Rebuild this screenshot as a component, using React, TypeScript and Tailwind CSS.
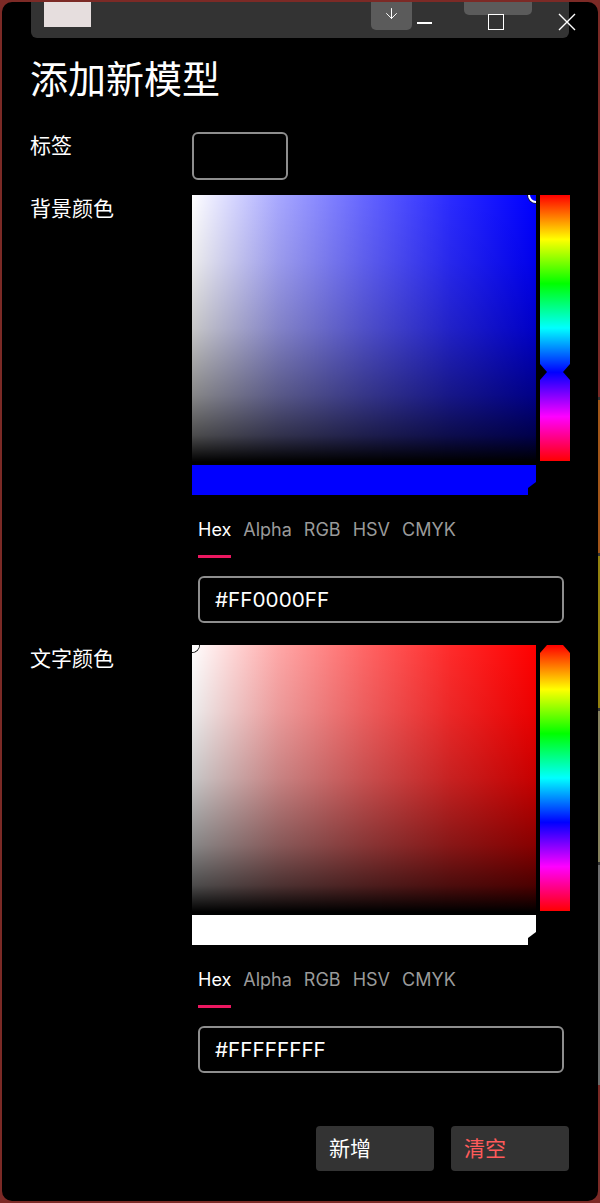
import { ArrowDown } from 'lucide-react';

type PickerProps = {
    hue: string;
    fill: string;
    hex: string;
    handle: 'tl' | 'tr';
    huePos: number;
};

const tabs = ['Hex', 'Alpha', 'RGB', 'HSV', 'CMYK'];

function ColorPicker({ hue, fill, hex, handle, huePos }: PickerProps) {
    return (
        <div className="flex flex-col">
            <div className="flex gap-[4px]">
                <div
                    className="relative w-[344px] h-[267px] overflow-hidden bg-[image:linear-gradient(to_bottom,rgba(0,0,0,0)_0%,rgba(0,0,0,0.08)_25%,rgba(0,0,0,0.22)_50%,rgba(0,0,0,0.47)_75%,rgba(0,0,0,0.7)_90%,#000_100%),linear-gradient(to_right,#fff_0%,rgba(255,255,255,0.66)_25%,rgba(255,255,255,0.4)_50%,rgba(255,255,255,0.17)_75%,rgba(255,255,255,0)_100%)]"
                    style={{ backgroundColor: hue }}
                >
                    {handle === 'tr' ? (
                        <div className="absolute -top-[8px] -right-[8px] w-[16px] h-[16px] rounded-full border-2 border-white shadow-[0_0_0_1px_#222]" />
                    ) : (
                        <div className="absolute -top-[7px] -left-[7px] w-[14px] h-[14px] rounded-full border-2 border-white shadow-[0_0_0_1px_#111]" />
                    )}
                </div>
                <div className="relative w-[30px] h-[266px] overflow-hidden bg-[image:linear-gradient(to_bottom,#f00,#ff0,#0f0,#0ff,#00f,#f0f,#f00)]">
                    <svg
                        className="absolute left-0 w-[30px] h-[16px]"
                        style={{ top: `calc(${huePos * 100}% - 8px)` }}
                        viewBox="0 0 30 16"
                    >
                        <polygon points="0,0 7,8 0,16" fill="#000" />
                        <polygon points="30,0 23,8 30,16" fill="#000" />
                    </svg>
                </div>
            </div>
            <div className="relative mt-[3px] w-[344px] h-[30px]" style={{ backgroundColor: fill }}>
                <svg className="absolute right-0 bottom-0 w-[8px] h-[13px]" viewBox="0 0 8 13">
                    <polygon points="0,13 0,6 8,0 8,13" fill="#000" />
                </svg>
            </div>
            <div className="ml-[6px] mt-[23px] flex gap-[12px] text-[18px] leading-[24px]">
                {tabs.map((t, i) => (
                    <div key={t} className="flex flex-col">
                        <span className={i === 0 ? 'text-white' : 'text-[#9a9a9a]'}>{t}</span>
                        <div className={i === 0 ? 'mt-[13px] h-[3px] bg-[#ec1760]' : 'mt-[13px] h-[3px]'} />
                    </div>
                ))}
            </div>
            <div className="ml-[6px] mt-[18px] w-[366px] h-[47px] rounded-[6px] border-2 border-[#8e8e8e] flex items-center pl-[15px] text-[20.7px] leading-[29px] text-white">
                {hex}
            </div>
        </div>
    );
}

export default function App() {
    return (
        <div className="relative w-[600px] h-[1203px] bg-[#7c2a26] p-[2px] overflow-hidden font-[family-name:Inter,'Noto_Sans_CJK_SC',sans-serif]">
            <div className="h-full bg-black rounded-[10px] flex flex-col">
                <div className="mx-[29px] h-[36px] bg-[#333333] rounded-b-[6px] flex items-start">
                    <div className="ml-[13px] w-[47px] h-[25px] bg-[#e6dede]" />
                    <div className="ml-[280px] w-[41px] h-[28px] bg-[#5b5b5b] rounded-b-[5px] flex justify-center pt-[3px]">
                        <ArrowDown size={17} strokeWidth={1.4} className="text-white" />
                    </div>
                </div>

                <h1 className="ml-[28px] mt-[18px] text-[38px] leading-[46px] text-white">添加新模型</h1>

                <div className="ml-[28px] mt-[30px] grid grid-cols-[162px_1fr] text-[21px] leading-[25px] text-white">
                    <div className="pt-[1px]">标签</div>
                    <div className="w-[96px] h-[48px] rounded-[6px] border-2 border-[#8e8e8e]" />

                    <div className="mt-[15px] pt-[1px]">背景颜色</div>
                    <div className="mt-[15px]">
                        <ColorPicker hue="#0000ff" fill="#0000ff" hex="#FF0000FF" handle="tr" huePos={0.667} />
                    </div>

                    <div className="mt-[22px] pt-[1px]">文字颜色</div>
                    <div className="mt-[22px]">
                        <ColorPicker hue="#ff0000" fill="#ffffff" hex="#FFFFFFFF" handle="tl" huePos={0} />
                    </div>
                </div>

                <div className="mt-[53px] mr-[29px] flex justify-end gap-[17px] text-[21px]">
                    <button className="w-[118px] h-[45px] rounded-[4px] bg-[#333333] text-white text-left pl-[13px]">新增</button>
                    <button className="w-[118px] h-[45px] rounded-[4px] bg-[#333333] text-[#ff5b5b] text-left pl-[13px]">清空</button>
                </div>
            </div>

            {/* caption buttons */}
            <div className="absolute left-[464px] top-[2px] w-[68px] h-[13px] bg-[#5b5b5b] rounded-b-[5px]" />
            <div className="absolute left-[417px] top-[22px] w-[15px] h-[1.5px] bg-white" />
            <div className="absolute left-[488px] top-[14px] w-[16px] h-[16px] border-[1.5px] border-white" />
            <svg className="absolute left-[558px] top-[13px] w-[18px] h-[18px]" viewBox="0 0 18 18">
                <path d="M1 1 L17 17 M17 1 L1 17" stroke="#fff" strokeWidth="1.4" />
            </svg>

            {/* background windows peeking at right edge */}
            <div className="absolute right-0 top-[397px] w-[2px] flex flex-col">
                <div className="h-[3px] bg-[#333]" />
                <div className="h-[153px] bg-[#a3561a]" />
                <div className="h-[3px] bg-[#333]" />
                <div className="h-[152px] bg-[#948210]" />
                <div className="h-[3px] bg-[#333]" />
                <div className="h-[151px] bg-[#86825e]" />
                <div className="h-[3px] bg-[#333]" />
                <div className="h-[220px] bg-[#6e6e6e]" />
            </div>
        </div>
    );
}
